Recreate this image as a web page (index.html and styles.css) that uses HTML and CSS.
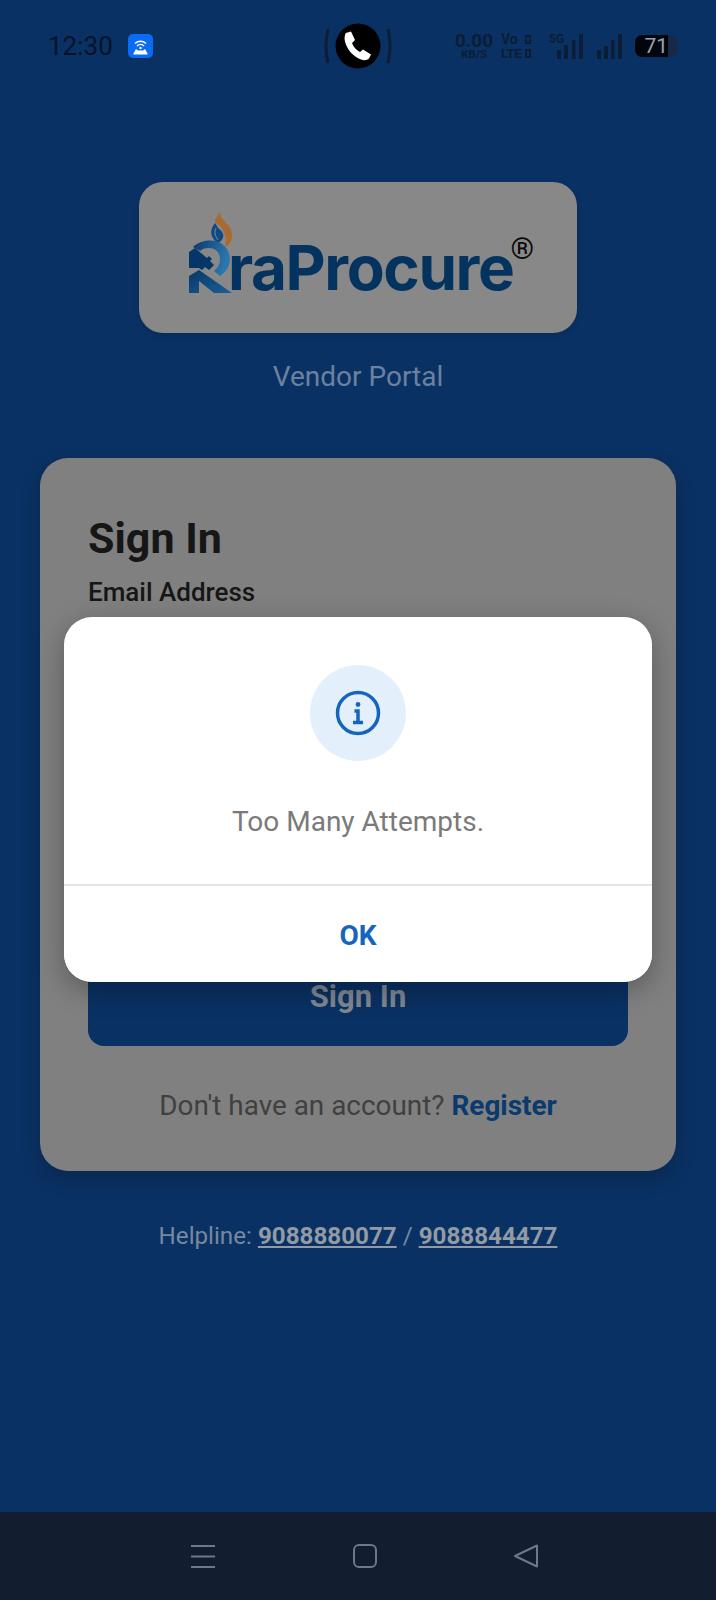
FILE: index.html
```html
<!DOCTYPE html>
<html lang="en">
<head>
  <meta charset="UTF-8" />
  <meta name="viewport" content="width=device-width, initial-scale=1" />
  <title>RaProcure - Vendor Portal</title>
  <link rel="stylesheet" href="styles.css">
</head>
<body>
  <div class="screen">
    <header class="status-bar">
      <div class="status-left">
        <span class="time">12:30</span>
        <svg class="hotspot" width="25" height="24" viewBox="0 0 25 24">
          <rect width="25" height="24" rx="5" fill="#0a6cf5" />
          <path d="M7 9.500a8 8 0 0 1 11 0M9 12a5 5 0 0 1 7 0" fill="none" stroke="#fff" stroke-width="1.500" />
          <circle cx="12.500" cy="14" r="1.200" fill="#fff" />
          <path d="M8 15l2 1.500h5l2-1.500 2.500 4.500v1h-14v-1z" fill="#fff" />
        </svg>
      </div>
      <div class="status-call">
        <svg width="68" height="46" viewBox="0 0 68 46">
          <path d="M4 6q-4 17 0 34M64 6q4 17 0 34" fill="none" stroke="#0c1d36" stroke-width="3" />
          <circle cx="34" cy="23" r="22.500" fill="#000" />
          <path d="M22 10l5-1.500 4 8.500-3 3c1.500 4 4 7 8 9l3-2.500 8 5-2 4c-2 2-5 2-8 1-8-3-14-10-16-18-.8-3-.5-6 1-9z" fill="#fff" />
        </svg>
      </div>
      <div class="status-right">
        <div class="speed"><b>0.00</b><span>KB/S</span></div>
        <div class="volte">
          <div><b class="vo">Vo</b><i></i></div>
          <div><b class="lte">LTE</b><i></i></div>
        </div>
        <div class="signal">
          <span class="net">5G</span>
          <svg width="26" height="25" viewBox="0 0 26 25" fill="#0c1d36">
            <rect x="0" y="16" width="4" height="9" />
            <rect x="7" y="11" width="4" height="14" />
            <rect x="15" y="6" width="3.500" height="19" />
            <rect x="22" y="0" width="4" height="25" />
          </svg>
        </div>
        <svg width="25" height="25" viewBox="0 0 25 25" fill="#0c1d36">
          <rect x="0" y="16" width="4" height="9" />
          <rect x="7" y="12" width="4" height="13" />
          <rect x="14" y="6" width="3.500" height="19" />
          <rect x="21" y="0" width="4" height="25" />
        </svg>
        <div class="battery"><span>71</span></div>
      </div>
    </header>

    <main class="content">
      <div class="logo-box">
        <svg class="logo-mark" width="48" height="85" viewBox="186 210 48 85">
          <defs>
            <linearGradient id="bowl" x1="0" y1="0" x2="1" y2="0.300">
              <stop offset="0" stop-color="#0a3a68" />
              <stop offset="1" stop-color="#2c77b0" />
            </linearGradient>
            <linearGradient id="leg" x1="0" y1="0" x2="1" y2="1">
              <stop offset="0" stop-color="#043768" />
              <stop offset="1" stop-color="#1c5f97" />
            </linearGradient>
          </defs>
          <path d="M219.500 212C221 222 232 224 232 236C232 241 229 245 225 247C227 240 225 232 221 227C219 224 215 224 215 221C215 218 218 216 219.500 212Z" fill="#a9692f" />
          <path d="M215 223C211 228 210 233 213 238C214 240 216 242 218 243C222 241 224 238 223 234C222 230 218 229 217 226Z" fill="#0d4a84" />
          <path d="M216 228C214 232 215 236 218 240" fill="none" stroke="#888" stroke-width="1" />
          <path d="M193 247C198 242 205 240.500 210 240.500C222 240.500 230 249 230 259C230 266 226 272 220 276L214 271C218 268 220 264 220 259C220 252 215 248 209 248C205 248 202 249 200 251Z" fill="url(#bowl)" />
          <path d="M189 252L195 248L207 258L209 256L212 259L210 261L214 265L209 270L205 267L202 270L199 268L189 268Z" fill="#043768" />
          <path d="M189 276L199 270L232 293L214 293L199 281L199 293L189 293Z" fill="url(#leg)" />
        </svg>
        <span class="logo-text">raProcure</span>
        <span class="logo-reg">®</span>
      </div>
      <p class="portal-name">Vendor Portal</p>

      <section class="card">
        <h1>Sign In</h1>
        <label class="field-label">Email Address</label>
        <div class="fields"></div>
        <button class="submit">Sign In</button>
        <p class="register">Don't have an account? <a href="#">Register</a></p>
      </section>

      <p class="helpline">Helpline: <a href="#">9088880077</a> / <a href="#">9088844477</a></p>
    </main>

    <nav class="nav-bar">
      <svg width="26" height="24" viewBox="0 0 26 24" fill="none" stroke="#6d7888" stroke-width="2">
        <path d="M1 2h24M1 12.500h24M1 23h24" />
      </svg>
      <svg width="24" height="24" viewBox="0 0 24 24" fill="none" stroke="#6d7888" stroke-width="2">
        <rect x="1" y="1" width="22" height="22" rx="5" />
      </svg>
      <svg width="24" height="24" viewBox="0 0 24 24" fill="none" stroke="#6d7888" stroke-width="2" stroke-linejoin="round">
        <path d="M23 1.500v21L1 12z" />
      </svg>
    </nav>

    <div class="overlay">
      <div class="dialog">
        <div class="dialog-body">
          <div class="dialog-icon">
            <svg width="46" height="46" viewBox="0 0 46 46" fill="none" stroke="#1565c0" stroke-width="3.500">
              <circle cx="23" cy="23" r="20.500" />
              <path d="M19.500 21h3.500v11M18 32.500h10" />
              <circle cx="23" cy="14.500" r="2.400" fill="#1565c0" stroke="none" />
            </svg>
          </div>
          <p class="dialog-text">Too Many Attempts.</p>
        </div>
        <button class="dialog-ok">OK</button>
      </div>
    </div>
  </div>
</body>
</html>
```

FILE: styles.css
```css
* { box-sizing: border-box; }
body { margin: 0; font-family: Roboto, "Noto Sans", sans-serif; }
p, h1 { margin: 0; }
a { color: inherit; }

.screen { position: relative; width: 716px; height: 1600px; display: flex; flex-direction: column; background: #0a3163; overflow: hidden; }

/* status bar */
.status-bar { height: 92px; flex: none; display: grid; grid-template-columns: 1fr auto 1fr; align-items: center; padding: 0 38px; color: #0c1d36; }
.status-left { display: flex; align-items: center; gap: 15px; margin-left: 10px; }
.time { font-size: 26px; color: #071428; }
.status-call { display: flex; }
.status-right { display: flex; align-items: center; justify-content: flex-end; gap: 6px; }
.speed { display: flex; flex-direction: column; align-items: center; width: 40px; margin-right: 1px; line-height: 1; }
.speed b { font-size: 19px; line-height: 15px; }
.speed span { font-size: 11.500px; font-weight: 700; line-height: 10px; margin-top: 1px; }
.volte { width: 30px; display: flex; flex-direction: column; gap: 3px; margin-right: 20px; }
.volte div { display: flex; justify-content: space-between; align-items: center; height: 11px; }
.vo { font-size: 14px; line-height: 11px; }
.lte { font-size: 13.500px; line-height: 11px; letter-spacing: -0.500px; }
.volte i { width: 6px; height: 9px; border: 2px solid #0c1d36; }
.signal { position: relative; margin-right: 8px; }
.net { position: absolute; top: 0; left: -8px; font-size: 12px; font-weight: 700; line-height: 10px; }
.signal svg { display: block; }
.battery { width: 43px; height: 22px; margin-left: 7px; padding-left: 2px; border-radius: 7px; background: linear-gradient(90deg, #02060c 76%, #16294a 76%); color: #98a2b0; font-size: 21px; line-height: 22px; }
.battery span { display: block; width: 31px; text-align: right; }

/* page content */
.content { flex: 1; display: flex; flex-direction: column; align-items: center; padding-top: 90px; }
.logo-box { width: 438px; height: 151px; display: flex; align-items: flex-start; background: #888; border-radius: 24px; padding: 28px 0 0 47px; box-shadow: 0 2px 6px rgba(0, 0, 0, 0.1); }
.logo-mark { flex: none; }
.logo-text { margin: 23px 0 0 -6px; font-family: Inter, Roboto, sans-serif; font-size: 62px; line-height: 70px; font-weight: 700; color: #04335f; letter-spacing: -1.400px; }
.logo-reg { margin: 22px 0 0 -3px; font-size: 30px; line-height: 34px; color: #0a0a0a; }
.portal-name { margin-top: 26px; font-size: 28px; line-height: 36px; color: #6b819f; }

.card { width: 636px; height: 713px; margin-top: 63px; padding: 56px 48px 0; background: #808080; border-radius: 28px; box-shadow: 0 8px 20px rgba(0, 0, 0, 0.2); }
.card h1 { font-size: 43px; line-height: 48px; font-weight: 700; color: #161616; }
.field-label { display: block; margin-top: 15px; font-size: 26px; line-height: 30px; font-weight: 500; color: #161616; }
.fields { height: 343px; }
.submit { display: block; width: 100%; height: 96px; padding-bottom: 4px; border: 0; border-radius: 16px; background: #0a3163; color: #7f8791; font-family: inherit; font-size: 31px; font-weight: 700; }
.register { margin-top: 42px; text-align: center; font-size: 27.900px; line-height: 36px; color: #404040; }
.register a { color: #0a3a6e; font-weight: 700; text-decoration: none; }
.helpline { margin-top: 47px; font-size: 24.200px; line-height: 36px; color: #76899f; }
.helpline a { color: #929aa5; font-weight: 700; }

.nav-bar { height: 88px; flex: none; display: flex; justify-content: center; align-items: center; gap: 137px; padding-left: 11px; background: #121e30; }

/* alert dialog */
.overlay { position: absolute; inset: 0; display: flex; align-items: center; justify-content: center; padding-bottom: 2px; }
.dialog { width: 588px; background: #fff; border-radius: 28px; box-shadow: 0 8px 28px rgba(0, 0, 0, 0.3); overflow: hidden; }
.dialog-body { display: flex; flex-direction: column; align-items: center; padding: 48px 0 44px; border-bottom: 2px solid #e4e4e4; }
.dialog-icon { width: 96px; height: 96px; display: flex; align-items: center; justify-content: center; border-radius: 50%; background: #e3f0fc; }
.dialog-text { margin-top: 43px; font-size: 28px; line-height: 36px; color: #7a7a7a; }
.dialog-ok { display: block; width: 100%; height: 96px; padding-top: 4px; border: 0; background: #fff; color: #1565c0; font-family: inherit; font-size: 28px; font-weight: 700; }
```
